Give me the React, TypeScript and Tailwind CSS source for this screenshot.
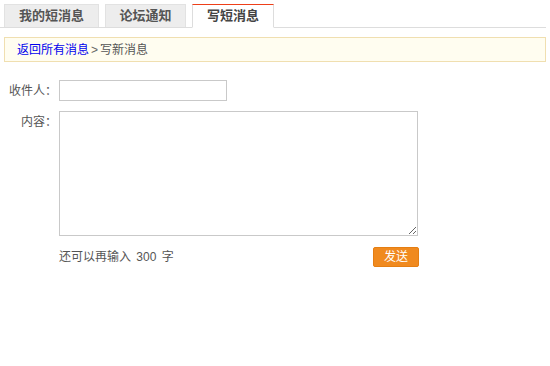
import React, { useState } from "react";

const font = { fontFamily: '"Liberation Sans", "Noto Sans CJK SC", sans-serif' };

export default function App() {
  const [active] = useState(2);
  const [text, setText] = useState("");

  const tabs = [
    { name: "我的短消息", w: "w-[95px]" },
    { name: "论坛通知", w: "w-[81px]" },
    { name: "写短消息", w: "w-[82px]" },
  ];

  return (
    <div className="w-[550px] h-[366px] bg-white text-[12px] text-[#333]" style={font}>
      {/* Tabs */}
      <div className="flex items-end gap-[6px] pl-[4px] pt-[4px] border-b border-[#dddddd] h-[28px] mr-[4px]">
        {tabs.map((t, i) =>
          i === active ? (
            <div
              key={t.name}
              className={`${t.w} h-[24px] -mb-px bg-white border border-[#dddddd] border-b-white border-t-[#ee3f19] flex items-center justify-center font-bold text-[13px] text-[#444]`}
            >
              {t.name}
            </div>
          ) : (
            <div
              key={t.name}
              className={`${t.w} h-[23px] bg-[#ededed] border border-b-0 border-[#e2e2e2] flex items-center justify-center font-bold text-[13px] text-[#555]`}
            >
              {t.name}
            </div>
          )
        )}
      </div>

      {/* Breadcrumb */}
      <div className="mx-[4px] mt-[9px] h-[25px] bg-[#fffdf0] border border-[#f0dfb0] flex items-center pl-[12px]">
        <a href="#" className="text-[#0000ee]">返回所有消息</a>
        <span className="text-[#666] mx-[2px]">&gt;</span>
        <span className="text-[#555]">写新消息</span>
      </div>

      {/* Form */}
      <div className="mt-[18px] flex flex-col">
        <div className="flex items-center">
          <label className="w-[59px] pr-[2px] text-right text-[#555]">收件人：</label>
          <input className="w-[168px] h-[21px] border border-[#c9c9c9] outline-none px-1" />
        </div>
        <div className="flex items-start mt-[10px]">
          <label className="w-[59px] pr-[2px] text-right text-[#555] pt-[2px]">内容：</label>
          <textarea
            value={text}
            onChange={(e) => setText(e.target.value.slice(0, 300))}
            className="w-[359px] h-[125px] border border-[#c9c9c9] outline-none p-1"
          />
        </div>
        <div className="flex items-center pl-[59px] w-[419px] justify-between mt-[11px]">
          <span className="text-[#555]">
            还可以再输入 <span className="mx-[2px]">{300 - text.length}</span> 字
          </span>
          <button className="w-[46px] h-[20px] bg-[#f08a1f] border border-[#e57e12] text-white text-[12px] rounded-[2px]">
            发送
          </button>
        </div>
      </div>
    </div>
  );
}
